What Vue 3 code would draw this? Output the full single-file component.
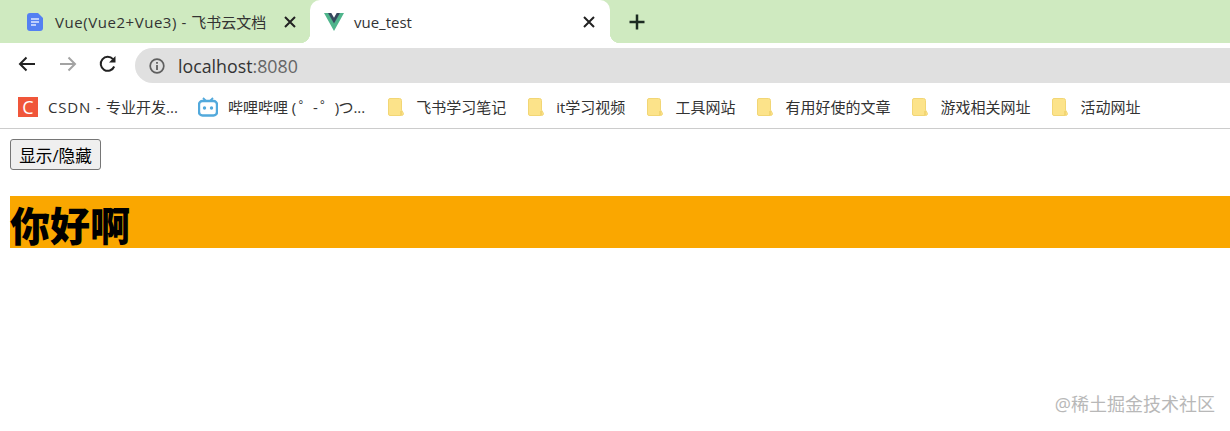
<script setup>
const folders = ['飞书学习笔记', 'it学习视频', '工具网站', '有用好使的文章', '游戏相关网址', '活动网址']
</script>

<template>
  <div class="page">
    <header class="browser">
      <div class="tabs">
        <div class="tab">
          <svg class="doc-icon" width="16" height="18" viewBox="0 0 16 18">
            <path d="M3 0h8l5 5v10a3 3 0 0 1-3 3H3a3 3 0 0 1-3-3V3a3 3 0 0 1 3-3z" fill="#5480f2" />
            <path d="M4 6h8M4 9h8M4 12h5" stroke="#dfe8ff" stroke-width="1.3" />
          </svg>
          <span class="tab-title"><span class="tab-latin">Vue(Vue2+Vue3) - </span>飞书云文档</span>
          <svg class="close" width="12" height="12" viewBox="0 0 12 12">
            <path d="M1 1l10 10M11 1L1 11" stroke="#222" stroke-width="2" />
          </svg>
        </div>
        <div class="tab active">
          <svg class="vue-icon" width="20" height="18" viewBox="0 0 20 18">
            <path d="M0 0h4.500L10 9.500 15.500 0H20L10 18z" fill="#4fb58c" />
            <path d="M4 0h3.300L10 4.800 12.700 0H16l-6 10.500z" fill="#35495e" />
          </svg>
          <span class="tab-title">vue_test</span>
          <svg class="close" width="12" height="12" viewBox="0 0 12 12">
            <path d="M1 1l10 10M11 1L1 11" stroke="#222" stroke-width="2" />
          </svg>
        </div>
        <svg class="plus" width="16" height="16" viewBox="0 0 16 16">
          <path d="M8 0.500v15M0.500 8h15" stroke="#1c2b22" stroke-width="2.500" />
        </svg>
      </div>

      <div class="toolbar">
        <svg width="20" height="20" viewBox="0 0 20 20">
          <path d="M18 10H3M9.500 3.500L3 10l6.500 6.500" fill="none" stroke="#222" stroke-width="2" />
        </svg>
        <svg width="20" height="20" viewBox="0 0 20 20">
          <path d="M2 10h15M10.500 3.500L17 10l-6.500 6.500" fill="none" stroke="#a3a3a3" stroke-width="2" />
        </svg>
        <svg width="20" height="20" viewBox="0 0 20 20">
          <path d="M16.200 12.500A7 7 0 1 1 15 5.200" fill="none" stroke="#222" stroke-width="2" />
          <path d="M17.500 2v6.500H11z" fill="#222" />
        </svg>
        <div class="omnibox">
          <svg width="16" height="16" viewBox="0 0 16 16">
            <circle cx="8" cy="8" r="6.800" fill="none" stroke="#5f5f5f" stroke-width="1.700" />
            <path d="M8 7v5M8 4v1.800" stroke="#5f5f5f" stroke-width="1.800" />
          </svg>
          <span class="url">localhost<span class="port">:8080</span></span>
        </div>
      </div>

      <div class="bookmarks">
        <div class="bookmark csdn">
          <span class="csdn-icon">C</span>
          <span><span class="csdn-latin">CSDN - </span>专业开发...</span>
        </div>
        <div class="bookmark bili">
          <svg width="20" height="20" viewBox="0 0 20 20">
            <path d="M5 1l3 3M15 1l-3 3" stroke="#52a9dc" stroke-width="1.800" />
            <rect x="1" y="4" width="18" height="14.500" rx="3.500" fill="none" stroke="#52a9dc" stroke-width="2.400" />
            <circle cx="6.500" cy="11" r="1.700" fill="#52a9dc" />
            <circle cx="13.500" cy="11" r="1.700" fill="#52a9dc" />
          </svg>
          <span>哔哩哔哩 <span class="kaomoji">( ゜- ゜)</span>つ...</span>
        </div>
        <div v-for="name in folders" :key="name" class="bookmark folder">
          <svg width="16" height="18" viewBox="0 0 16 18">
            <path d="M2 .5h9.500a2 2 0 0 1 2 2V12l2 3.500a2 2 0 0 1-2 2H2a1.500 1.500 0 0 1-1.500-1.500V2A1.500 1.500 0 0 1 2 .5z" fill="#fce38a" stroke="#f2d675" />
            <path d="M13 17v-4" stroke="#e9c85c" />
          </svg>
          <span>{{ name }}</span>
        </div>
      </div>
    </header>

    <main class="content">
      <button class="toggle">显示/隐藏</button>
      <h2 class="hello">你好啊</h2>
    </main>

    <span class="watermark">@稀土掘金技术社区</span>
  </div>
</template>

<style scoped>
.page {
  position: relative;
  height: 431px;
  overflow: hidden;
  background: #fff;
  font-family: "Open Sans", "Noto Sans CJK SC", sans-serif;
  color: #333;
}

.tabs {
  display: flex;
  align-items: center;
  height: 43px;
  background: #cfeac0;
}

.tab {
  position: relative;
  display: flex;
  align-items: center;
  height: 43px;
  font-size: 15px;
  box-sizing: border-box;
}

.tab:first-child {
  width: 310px;
  padding: 0 14px 0 27px;
}

.tab.active {
  width: 300px;
  padding: 0 15px 0 14px;
  background: #fff;
  border-radius: 10px 10px 0 0;
}

.tab.active::before,
.tab.active::after {
  content: "";
  position: absolute;
  bottom: 0;
  width: 10px;
  height: 10px;
}

.tab.active::before {
  left: -10px;
  background: radial-gradient(circle at 0 0, transparent 10px, #fff 10.500px);
}

.tab.active::after {
  right: -10px;
  background: radial-gradient(circle at 100% 0, transparent 10px, #fff 10.500px);
}

.doc-icon {
  margin-right: 12px;
}

.vue-icon {
  margin-right: 10px;
}

.tab-title {
  flex: 1;
  color: #333;
  white-space: nowrap;
}

.tab-latin {
  letter-spacing: 0.55px;
}

.plus {
  margin-left: 19px;
}

.toolbar {
  display: flex;
  align-items: center;
  gap: 20.500px;
  height: 42px;
  padding-left: 17px;
  box-sizing: border-box;
}

.omnibox {
  flex: 1;
  display: flex;
  align-items: center;
  height: 35px;
  margin: 3px 0 0 -3.500px;
  padding-left: 14px;
  background: #e0e0e0;
  border-radius: 18px 0 0 18px;
}

.url {
  margin-left: 13px;
  font-size: 17.800px;
  line-height: 26px;
  color: #333;
}

.port {
  color: #666;
}

.bookmarks {
  display: flex;
  align-items: center;
  gap: 22px;
  height: 44px;
  padding-left: 18px;
  border-bottom: 1px solid #ccc;
  box-sizing: border-box;
  font-size: 15px;
  white-space: nowrap;
}

.bookmark {
  display: flex;
  align-items: center;
  gap: 10px;
}

.bookmark > span:last-child {
  margin-top: -1px;
}

.bili {
  margin: 0 1px 0 -2px;
}

.folder {
  gap: 12px;
}

.csdn-latin {
  letter-spacing: 0.8px;
}

.kaomoji {
  letter-spacing: -0.7px;
}

.csdn-icon {
  width: 20px;
  height: 20px;
  background: #f0563a;
  color: #fff;
  font-size: 18px;
  line-height: 20px;
  text-align: center;
}

.content {
  padding: 10px;
}

.toggle {
  display: block;
  width: 91px;
  height: 31px;
  padding: 0;
  background: #efefef;
  border: 1px solid #767676;
  border-radius: 3px;
  color: #000;
  font-family: inherit;
  font-size: 16.600px;
}

.hello {
  margin: 26px -10px 0 0;
  padding-top: 7px;
  background: #faa700;
  color: #000;
  font-size: 40px;
  font-weight: 900;
  line-height: 45px;
}

.watermark {
  position: absolute;
  right: 15px;
  top: 392px;
  color: #b8b8b8;
  font-size: 18px;
  line-height: 25px;
}
</style>
